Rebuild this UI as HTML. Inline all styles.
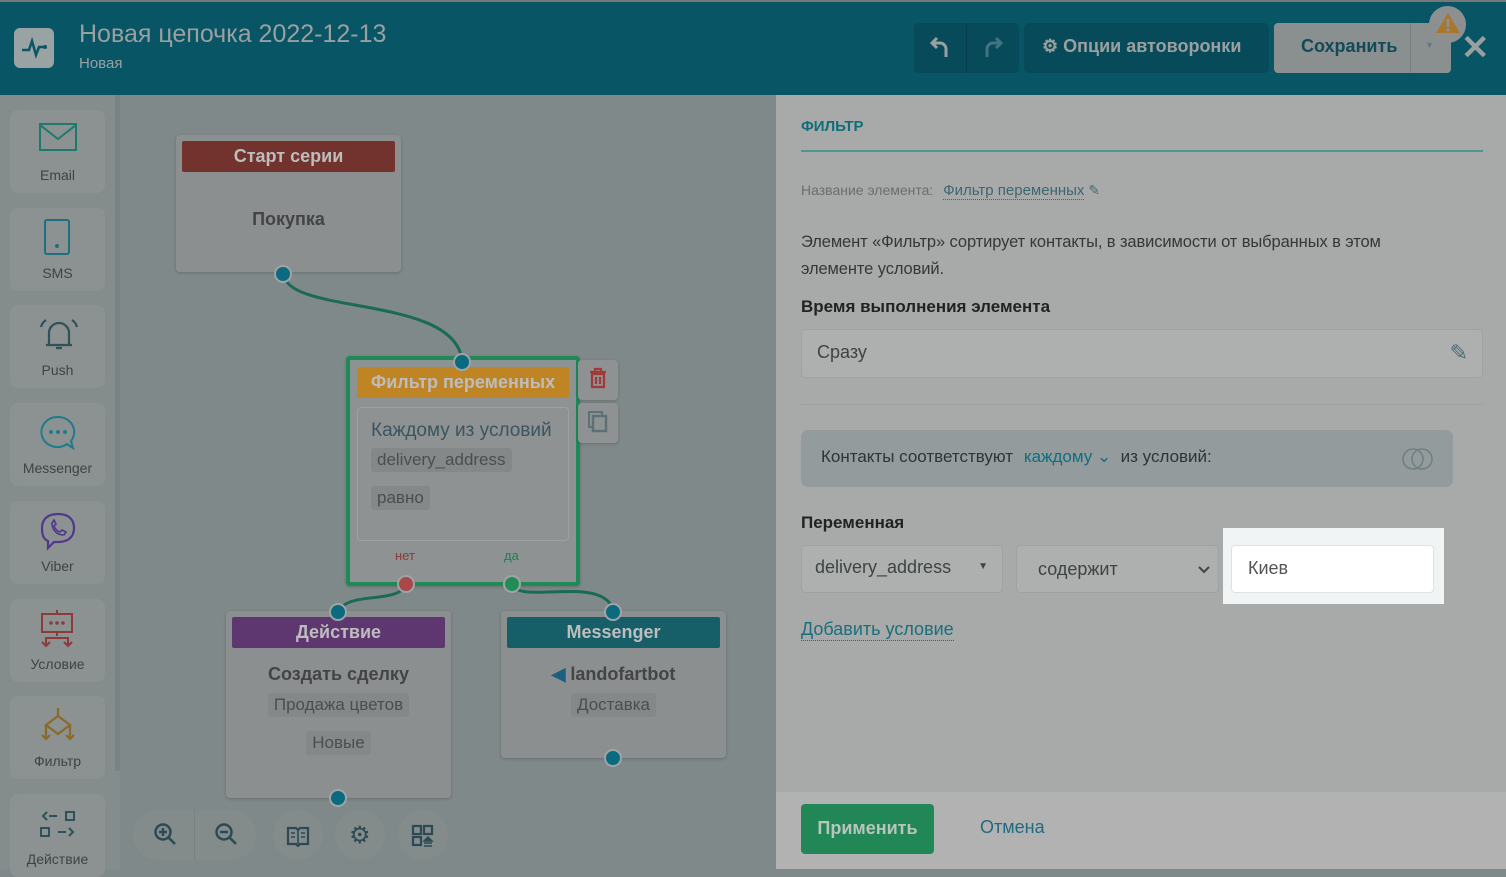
<!DOCTYPE html>
<html><head><meta charset="utf-8"><style>
*{box-sizing:border-box;margin:0;padding:0}
body{width:1506px;height:869px;overflow:hidden;position:relative;font-family:"Liberation Sans",sans-serif;background:#7f898a}
.abs{position:absolute}
.hdr{left:0;top:0;width:1506px;height:95px;background:#085566;border-top:2px solid #777}
.side{left:0;top:95px;width:120px;height:774px;background:#858c8c}
.sbar{left:115px;top:95px;width:5px;height:676px;background:#7a8282}
.card{position:absolute;left:10px;width:95px;height:83px;background:#8c9191;border-radius:8px;text-align:center;color:#3d4444;font-size:14px}
.card .lb{position:absolute;left:0;right:0;bottom:10px}
.card svg{position:absolute;left:28px;top:10px}
.node{position:absolute;background:#8c8f90;border-radius:4px;box-shadow:0 1px 3px rgba(0,0,0,.2)}
.nh{position:absolute;left:6px;right:6px;top:6px;height:31px;color:#bdbdbd;font-weight:bold;font-size:18px;text-align:center;line-height:30px;border-radius:2px}
.tag{display:inline-block;background:#858889;border-radius:3px;padding:2px 6px;color:#4a4e4f;font-size:17px}
.dot{position:absolute;width:18px;height:18px;border-radius:50%;border:2px solid #a0a4a5;background:#0a6a80}
.rp{left:776px;top:95px;width:730px;height:697px;background:#a8aaa9}
.ft{left:776px;top:792px;width:730px;height:77px;background:#b2b2b2}
.inp{position:absolute;background:#aeafaf;border:1px solid #9ea2a2;border-radius:4px;color:#3e4444;font-size:18px}
.zb{position:absolute;top:810px;height:50px;background:#848b8b;border-radius:25px}
.zi{position:absolute;top:822px}
</style></head><body>
<div class="abs hdr"></div>
<div class="abs" style="left:14px;top:28px;width:40px;height:40px;background:#9aa3a4;border-radius:6px"><svg width="40" height="40" viewBox="0 0 40 40"><path d="M8 22h7l3-9 4 14 3-8h5" fill="none" stroke="#0a5566" stroke-width="2.5"/><circle cx="31" cy="19" r="2" fill="#0a5566"/></svg></div>
<div class="abs" style="left:79px;top:20px;color:#9aa0a0;font-size:25px">Новая цепочка 2022-12-13</div>
<div class="abs" style="left:79px;top:55px;color:#9aa0a0;font-size:15px">Новая</div>
<div class="abs" style="left:914px;top:23px;width:105px;height:50px;background:#074a59;border-radius:5px"></div>
<div class="abs" style="left:966px;top:23px;width:1px;height:50px;background:#063f4c"></div>
<svg class="abs" style="left:928px;top:34px" width="24" height="26"><path d="M9 4L4 9l5 5M4 9h8a6 6 0 016 6v8" fill="none" stroke="#9aa0a0" stroke-width="3"/></svg>
<svg class="abs" style="left:981px;top:34px" width="24" height="26"><path d="M15 4l5 5-5 5M20 9h-8a6 6 0 00-6 6v8" fill="none" stroke="#3f7580" stroke-width="3"/></svg>
<div class="abs" style="left:1024px;top:23px;width:245px;height:50px;background:#074a59;border-radius:5px;color:#9aa0a0;font-weight:bold;font-size:18px;line-height:46px;padding-left:18px">⚙ Опции автоворонки</div>
<div class="abs" style="left:1274px;top:23px;width:177px;height:50px;background:#8a8f90;border-radius:4px;color:#134a58;font-weight:bold;font-size:18px;line-height:46px;padding-left:27px">Сохранить</div>
<div class="abs" style="left:1410px;top:23px;width:1px;height:50px;background:#7a8080"></div>
<div class="abs" style="left:1425px;top:40px;color:#5f7a80;font-size:9px">▼</div>
<div class="abs" style="left:1429px;top:6px;width:37px;height:37px;border-radius:50%;background:#8d9090"></div>
<svg class="abs" style="left:1435px;top:11px" width="26" height="24"><path d="M13 2L25 22H1z" fill="#a8762c"/><rect x="11.5" y="8" width="3" height="8" fill="#8d9090"/><rect x="11.5" y="17.5" width="3" height="3" fill="#8d9090"/></svg>
<div class="abs" style="left:1461px;top:28px;color:#9aa0a0;font-size:34px;font-weight:bold">✕</div>

<div class="abs side"></div><div class="abs sbar"></div>
<div class="card" style="top:110px"><svg width="40" height="36"><rect x="2" y="4" width="36" height="26" fill="none" stroke="#1e7a6c" stroke-width="2"/><path d="M2 5l18 14 18-14" fill="none" stroke="#1e7a6c" stroke-width="2"/></svg><div class="lb">Email</div></div>
<div class="card" style="top:208px"><svg width="40" height="40"><rect x="7" y="2" width="24" height="34" rx="2" fill="none" stroke="#1e6f7f" stroke-width="2"/><circle cx="19" cy="28" r="2" fill="#1e6f7f"/></svg><div class="lb">SMS</div></div>
<div class="card" style="top:305px"><svg width="40" height="40"><path d="M8 30h26M11 30V18a10 10 0 0120 0v12M3 12a12 12 0 015-7M39 12a12 12 0 00-5-7M18 33h6" fill="none" stroke="#2f5158" stroke-width="2.2"/></svg><div class="lb">Push</div></div>
<div class="card" style="top:403px"><svg width="40" height="40"><path d="M20 4a16 15 0 1 0 9 27l6 4-2-7A16 15 0 0 0 20 4z" fill="none" stroke="#1c7c8c" stroke-width="2"/><circle cx="13" cy="19" r="2" fill="#1c7c8c"/><circle cx="20" cy="19" r="2" fill="#1c7c8c"/><circle cx="27" cy="19" r="2" fill="#1c7c8c"/></svg><div class="lb">Messenger</div></div>
<div class="card" style="top:501px"><svg width="40" height="40"><path d="M20 3c9 0 16 4 16 14s-7 14-16 14h-4l-6 6v-7C5 28 4 23 4 17 4 7 11 3 20 3z" fill="none" stroke="#50388a" stroke-width="2.2"/><path d="M14 12c0 7 5 12 12 12l2-3-4-2-2 2c-3-1-5-3-6-6l2-2-2-4z" fill="none" stroke="#50388a" stroke-width="1.6"/></svg><div class="lb">Viber</div></div>
<div class="card" style="top:599px"><svg width="40" height="40"><rect x="4" y="5" width="30" height="18" fill="none" stroke="#8c3a3a" stroke-width="2"/><circle cx="13" cy="14" r="1.8" fill="#8c3a3a"/><circle cx="19" cy="14" r="1.8" fill="#8c3a3a"/><circle cx="25" cy="14" r="1.8" fill="#8c3a3a"/><path d="M19 1v4M19 23v4M8 36v-7h22v7M4 33l4 4 4-4M26 33l4 4 4-4" fill="none" stroke="#8c3a3a" stroke-width="2"/></svg><div class="lb">Условие</div></div>
<div class="card" style="top:696px"><svg width="40" height="40"><path d="M20 2v8l-12 9 12 9 12-9-12-9M8 19v12M32 19v12M4 29l4 4 4-4M28 29l4 4 4-4" fill="none" stroke="#8a6a26" stroke-width="2.2"/></svg><div class="lb">Фильтр</div></div>
<div class="card" style="top:794px"><svg width="40" height="40"><path d="M9 8l-4 4 4 4M11 12h8M28 8h8v8h-8zM3 24h8v8H3zM20 28h8M31 24l4 4-4 4" fill="none" stroke="#2f5158" stroke-width="2"/></svg><div class="lb">Действие</div></div>

<svg class="abs" style="left:0;top:0" width="776" height="869"><path d="M284 275c5 40 170 20 178 85M406 585c-10 20-60 5-68 28M512 585c10 20 95-12 102 28" fill="none" stroke="#1a6a55" stroke-width="3"/></svg>

<div class="node" style="left:176px;top:135px;width:225px;height:137px"><div class="nh" style="background:#72332e">Старт серии</div><div class="abs" style="left:0;right:0;top:74px;text-align:center;color:#444;font-weight:bold;font-size:18px">Покупка</div></div>
<div class="dot" style="left:274px;top:265px"></div>

<div class="node" style="left:346px;top:356px;width:234px;height:230px;border:4px solid #1e8a58;background:#8f9293"><div class="nh" style="background:#bf8524;left:7px;right:7px;top:7px">Фильтр переменных</div>
<div class="abs" style="left:7px;right:7px;top:47px;height:134px;border:1px solid #9ea1a2;border-radius:4px;padding:12px 13px">
<div style="color:#3a5560;font-size:19px">Каждому из условий</div>
<div class="tag" style="margin-top:6px">delivery_address</div><br><div class="tag" style="margin-top:14px">равно</div></div>
<div class="abs" style="left:45px;top:188px;color:#8a3a3a;font-size:13px">нет</div>
<div class="abs" style="left:154px;top:188px;color:#1e7f50;font-size:13px">да</div></div>
<div class="dot" style="left:453px;top:353px"></div>
<div class="dot" style="left:397px;top:575px;background:#a84848"></div>
<div class="dot" style="left:503px;top:575px;background:#218c55"></div>
<div class="node" style="left:578px;top:360px;width:40px;height:40px;background:#8f9293"><svg width="40" height="40"><path d="M12 12h16M17 12V9h6v3M14 14h12v13H14zM18 17v7M22 17v7" fill="none" stroke="#a33838" stroke-width="2.2"/></svg></div>
<div class="node" style="left:578px;top:403px;width:40px;height:40px;background:#8f9293"><svg width="40" height="40"><rect x="11" y="9" width="13" height="15" fill="none" stroke="#5c7076" stroke-width="2"/><rect x="15" y="13" width="13" height="15" fill="#8f9293" stroke="#5c7076" stroke-width="2.4"/></svg></div>

<div class="node" style="left:226px;top:611px;width:225px;height:187px"><div class="nh" style="background:#5e3770">Действие</div>
<div class="abs" style="left:0;right:0;top:53px;text-align:center"><div style="color:#444;font-weight:bold;font-size:18px">Создать сделку</div><div class="tag" style="margin-top:8px">Продажа цветов</div><br><div class="tag" style="margin-top:14px">Новые</div></div></div>
<div class="dot" style="left:329px;top:603px"></div><div class="dot" style="left:329px;top:789px"></div>
<div class="node" style="left:501px;top:611px;width:225px;height:147px"><div class="nh" style="background:#165f68">Messenger</div>
<div class="abs" style="left:0;right:0;top:53px;text-align:center"><div style="color:#444;font-weight:bold;font-size:18px"><span style="color:#1d5f80">◀</span> landofartbot</div><div class="tag" style="margin-top:8px">Доставка</div></div></div>
<div class="dot" style="left:604px;top:603px"></div><div class="dot" style="left:604px;top:749px"></div>

<div class="zb" style="left:133px;width:123px"></div><div class="abs" style="left:194px;top:810px;width:1px;height:50px;background:#7a8181"></div>
<div class="zb" style="left:273px;width:50px"></div><div class="zb" style="left:335px;width:50px"></div><div class="zb" style="left:398px;width:50px"></div>
<svg class="zi" style="left:153px" width="26" height="26"><circle cx="10" cy="10" r="7.5" fill="none" stroke="#2d4a54" stroke-width="2.5"/><path d="M16 16l6 6M10 6v8M6 10h8" stroke="#2d4a54" stroke-width="2.5"/></svg>
<svg class="zi" style="left:214px" width="26" height="26"><circle cx="10" cy="10" r="7.5" fill="none" stroke="#2d4a54" stroke-width="2.5"/><path d="M16 16l6 6M6 10h8" stroke="#2d4a54" stroke-width="2.5"/></svg>
<svg class="zi" style="left:286px;top:825px" width="24" height="22"><path d="M2 3h8l2 2 2-2h8v16h-8l-2 2-2-2H2z" fill="none" stroke="#2d4a54" stroke-width="2.2"/><path d="M12 5v14M5 8h4M5 12h4M15 8h4M15 12h4" stroke="#2d4a54" stroke-width="1.6"/></svg>
<div class="abs" style="left:349px;top:821px;color:#2d4a54;font-size:24px">⚙</div>
<svg class="zi" style="left:411px;top:824px" width="24" height="24"><rect x="2" y="2" width="8" height="8" fill="none" stroke="#2d4a54" stroke-width="2.2"/><rect x="13" y="2" width="8" height="8" fill="none" stroke="#2d4a54" stroke-width="2.2"/><rect x="2" y="13" width="8" height="8" fill="none" stroke="#2d4a54" stroke-width="2.2"/><path d="M13 17l4-4 4 4zM13 19h8M13 22h8" fill="#2d4a54" stroke="#2d4a54" stroke-width="1.5"/></svg>

<div class="abs rp"></div><div class="abs ft"></div>
<div class="abs" style="left:801px;top:118px;color:#0f6e78;font-weight:bold;font-size:15px">ФИЛЬТР</div>
<div class="abs" style="left:801px;top:150px;width:682px;height:2px;background:#4f9594"></div>
<div class="abs" style="left:801px;top:182px;color:#6a6e6e;font-size:14px">Название элемента: <span style="color:#3d6670;border-bottom:1px dotted #3d6670;margin-left:6px;font-size:15px">Фильтр переменных</span> <span style="color:#4c6b74">✎</span></div>
<div class="abs" style="left:801px;top:229px;width:650px;color:#343838;font-size:16.5px;line-height:27px;letter-spacing:-0.1px">Элемент «Фильтр» сортирует контакты, в зависимости от выбранных в этом элементе условий.</div>
<div class="abs" style="left:801px;top:297px;color:#222;font-weight:bold;font-size:17px">Время выполнения элемента</div>
<div class="inp" style="left:801px;top:329px;width:682px;height:49px;padding:12px 15px">Сразу<span style="position:absolute;right:14px;top:10px;color:#4c6b74;font-size:22px">✎</span></div>
<div class="abs" style="left:801px;top:404px;width:682px;height:1px;background:#9aa0a0"></div>
<div class="abs" style="left:801px;top:430px;width:652px;height:57px;background:#939b9c;border-radius:7px;padding:17px 20px;font-size:17px;color:#2f3434">Контакты соответствуют <span style="color:#0f6e80;margin-left:6px">каждому ⌄</span> &nbsp;из условий:<svg style="position:absolute;right:18px;top:17px" width="34" height="24"><circle cx="12" cy="12" r="10" fill="none" stroke="#6f8083" stroke-width="1.6"/><circle cx="21" cy="12" r="10" fill="none" stroke="#6f8083" stroke-width="1.6"/></svg></div>
<div class="abs" style="left:801px;top:513px;color:#222;font-weight:bold;font-size:17px">Переменная</div>
<div class="inp" style="left:801px;top:545px;width:202px;height:48px;padding:11px 13px">delivery_address<span style="position:absolute;right:14px;top:15px;font-size:10px">▼</span></div>
<div class="inp" style="left:1016px;top:545px;width:203px;height:48px;padding:13px 21px">содержит<svg style="position:absolute;right:8px;top:19px" width="12" height="10"><path d="M1 2l5 5 5-5" fill="none" stroke="#3e4444" stroke-width="2"/></svg></div>
<div class="abs" style="left:1223px;top:528px;width:221px;height:76px;background:#f1f4f5"></div>
<div class="abs" style="left:1231px;top:545px;width:203px;height:48px;background:#fff;border:1px solid #dde3e5;border-radius:4px;padding:12px 16px;color:#555;font-size:18px">Киев</div>
<div class="abs" style="left:801px;top:619px;color:#1a6f7e;font-size:18px;border-bottom:1px dotted #1a6f7e">Добавить условие</div>
<div class="abs" style="left:801px;top:804px;width:133px;height:50px;background:#218756;border-radius:4px;color:#b8c4bd;font-weight:bold;font-size:18px;line-height:48px;text-align:center">Применить</div>
<div class="abs" style="left:980px;top:817px;color:#1f6a7e;font-size:18px">Отмена</div>
</body></html>
